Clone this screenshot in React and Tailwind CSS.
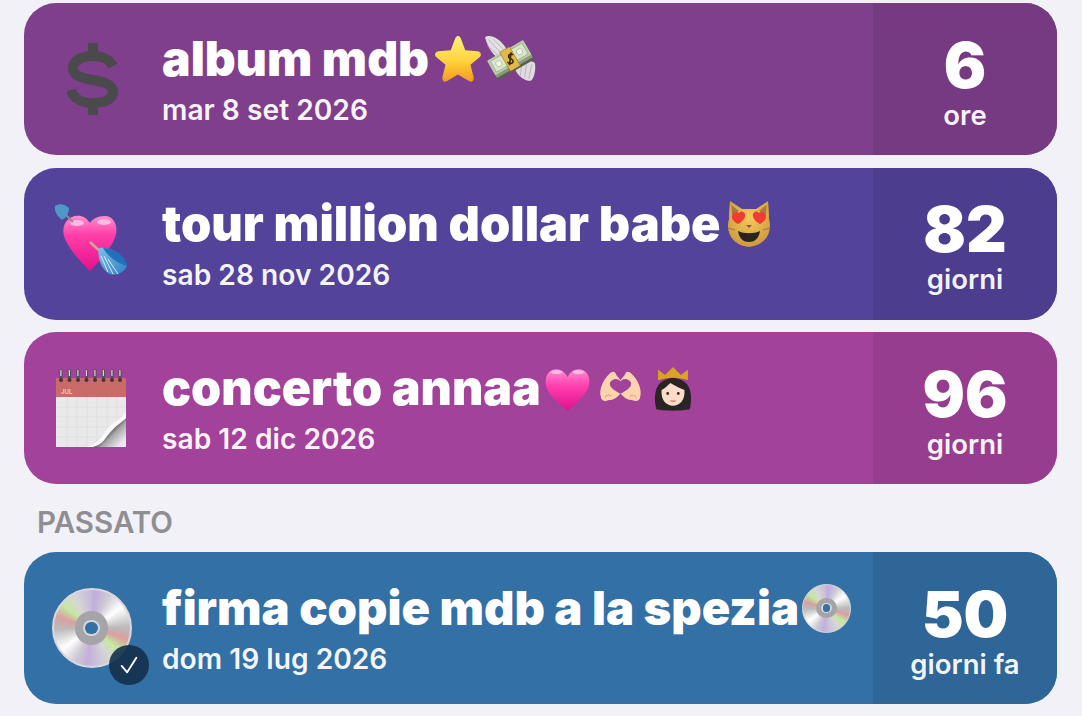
import React from "react";

function Star() {
  return (
    <svg viewBox="0 0 100 100" className="w-[52px] h-[52px] shrink-0">
      <defs>
        <linearGradient id="st" x1="0" y1="0" x2="0" y2="1">
          <stop offset="0" stopColor="#fff27a" />
          <stop offset="0.55" stopColor="#ffd23c" />
          <stop offset="1" stopColor="#f59a1c" />
        </linearGradient>
      </defs>
      <path d="M50 6 C53 6 55 9 56 12 L64 33 L87 35 C94 36 96 42 92 46 L74 61 L80 85 C81 92 76 96 70 92 L50 80 L30 92 C24 96 19 92 20 85 L26 61 L8 46 C4 42 6 36 13 35 L36 33 L44 12 C45 9 47 6 50 6 Z" fill="url(#st)" />
    </svg>
  );
}

function FlyingMoney() {
  return (
    <svg viewBox="0 0 100 100" className="w-[52px] h-[52px] shrink-0">
      <path d="M2 8 C10 2 30 8 44 32 L34 50 C20 48 8 30 2 8 Z" fill="#e2dfe2" />
      <path d="M8 12 L36 42 M18 12 L42 36 M6 24 L30 46" stroke="#a6a4a8" strokeWidth="1.3" />
      <path d="M98 58 C100 72 96 88 90 92 C76 92 64 80 60 70 L74 58 C82 54 92 52 98 58 Z" fill="#dedcde" />
      <path d="M92 60 L86 88 M82 60 L78 86 M72 64 L70 82" stroke="#a4a2a6" strokeWidth="1.3" />
      <g transform="rotate(-30 50 50)">
        <rect x="10" y="42" width="80" height="32" rx="1" fill="#565f50" />
        <rect x="10" y="37" width="80" height="32" rx="1" fill="#8a9a78" />
        <rect x="10" y="31" width="80" height="32" rx="1" fill="#bccdaa" />
        <rect x="15" y="35" width="70" height="24" fill="#d9e6cc" stroke="#93a684" strokeWidth="1.2" />
        <circle cx="27" cy="47" r="6" fill="#f0f5ea" stroke="#93a684" strokeWidth="1" />
        <circle cx="73" cy="47" r="6" fill="#f0f5ea" stroke="#93a684" strokeWidth="1" />
        <rect x="39" y="29" width="22" height="42" fill="#e2b94a" stroke="#8a6a1d" strokeWidth="1" />
      </g>
      <path d="M56 42 C52 39 45 42 48 47 C50 50 56 50 56 55 C56 59 50 60 45 56 M52 37 L49 62" stroke="#3a2e12" strokeWidth="3.2" fill="none" />
    </svg>
  );
}

function Dollar() {
  return (
    <svg viewBox="0 0 52 72" className="w-[52px] h-[72px]" fill="none" stroke="#4a4a4c">
      <path d="M46 23 C42 16 34 13 26 13 C14 13 6 18 6 25 C6 33 15 35 26 37 C38 39 46 42 46 49 C46 56 38 60 26 60 C14 60 6 55 4 47" strokeWidth="10" />
      <path d="M26 0 V10 M26 62 V72" strokeWidth="10" />
    </svg>
  );
}

function CupidHeart() {
  return (
    <svg viewBox="0 0 80 80" className="w-[80px] h-[80px]">
      <defs>
        <linearGradient id="ch" x1="0" y1="0" x2="0" y2="1">
          <stop offset="0" stopColor="#ff8fd0" />
          <stop offset="0.35" stopColor="#ff3fa8" />
          <stop offset="1" stopColor="#e6108a" />
        </linearGradient>
        <linearGradient id="fe" x1="0" y1="0" x2="1" y2="1">
          <stop offset="0" stopColor="#7ec0ea" />
          <stop offset="1" stopColor="#2e7fc4" />
        </linearGradient>
      </defs>
      <path d="M37 19 C33 12 25 10 19 13 C10 17 8 28 13 37 C19 49 29 59 37 67 C45 58 60 44 63 30 C65 20 60 12 52 12 C44 12 40 15 37 19 Z" fill="url(#ch)" />
      <ellipse cx="24" cy="19" rx="7" ry="3" fill="#ffc6e6" opacity="0.85" />
      <ellipse cx="51" cy="18" rx="7" ry="3" fill="#ffc6e6" opacity="0.85" />
      <path d="M10 8 L20 18" stroke="#9a8a84" strokeWidth="2" />
      <path d="M2 2 C6 -1 12 0 16 4 C16 9 13 14 9 16 C5 13 1 8 2 2 Z" fill="#4f97c8" />
      <path d="M37 38 L52 52" stroke="#c8a898" strokeWidth="2.4" />
      <path d="M46 44 C58 42 72 52 74 62 C70 70 62 72 56 70 C48 64 44 54 46 44 Z" fill="url(#fe)" />
      <path d="M50 44 C62 44 72 52 74 62 C66 60 56 54 50 44 Z" fill="#2270b8" />
      <path d="M48 52 L55 68 M51 52 L60 70 M55 55 L65 70" stroke="#d6ecfa" strokeWidth="1" />
    </svg>
  );
}

function Cat() {
  return (
    <svg viewBox="0 0 100 100" className="w-[50px] h-[50px] shrink-0">
      <defs>
        <radialGradient id="cg" cx="0.5" cy="0.35" r="0.75">
          <stop offset="0" stopColor="#f6cb5a" />
          <stop offset="1" stopColor="#c9913a" />
        </radialGradient>
      </defs>
      <path d="M12 4 L36 20 L64 20 L88 4 C90 24 90 32 90 40 C96 58 90 92 50 96 C10 92 4 58 10 40 C10 32 10 24 12 4 Z" fill="url(#cg)" />
      <path d="M15 12 L30 24 L16 32 Z M85 12 L70 24 L84 32 Z" fill="#a77a3e" />
      <path d="M30 28 C33 23 40 24 42 30 C44 38 36 46 28 50 C20 46 13 38 17 31 C20 25 27 25 30 28 Z" fill="#ef3b36" />
      <path d="M70 28 C73 25 80 25 83 31 C87 38 80 46 72 50 C64 46 56 38 58 30 C60 24 67 23 70 28 Z" fill="#ef3b36" />
      <path d="M44 52 L56 52 L50 58 Z" fill="#8a5a3a" />
      <path d="M28 64 C40 70 60 70 72 64 C70 80 60 86 50 86 C40 86 30 80 28 64 Z" fill="#2a2420" />
      <path d="M8 58 L22 62 M92 58 L78 62" stroke="#8a6a30" strokeWidth="1.5" />
    </svg>
  );
}

function Calendar() {
  const xs = [6, 14.5, 23, 31.5, 40, 48.5, 57, 65];
  return (
    <svg viewBox="0 0 72 80" className="w-[72px] h-[80px] -ml-[3px]">
      <defs>
        <linearGradient id="cu" gradientUnits="userSpaceOnUse" x1="52" y1="62" x2="66" y2="76">
          <stop offset="0" stopColor="#333333" />
          <stop offset="0.4" stopColor="#a8a8a8" />
          <stop offset="1" stopColor="#efe8ef" />
        </linearGradient>
      </defs>
      <rect x="1" y="10" width="70" height="19" fill="#c96b67" />
      <path d="M1 29 H71 V79 H1 Z" fill="#e9e9e9" />
      {[12, 22, 32, 42, 52, 62].map((x) => (
        <path key={x} d={`M${x} 29 V79`} stroke="#dcdcdc" strokeWidth="0.8" />
      ))}
      {[39, 49, 59, 69].map((y) => (
        <path key={y} d={`M1 ${y} H71`} stroke="#dcdcdc" strokeWidth="0.8" />
      ))}
      <path d="M71 50 L71 79 L34 79 C50 76 56 60 71 50 Z" fill="url(#cu)" />
      <path d="M71 44 C66 52 54 56 50 64 C46 72 40 77 30 79 L38 79 C46 77 50 72 53 66 C57 59 66 56 71 50 Z" fill="#fafafa" />
      <text x="6" y="26" fontFamily="Inter, sans-serif" fontSize="6" fontWeight="600" fill="#f3d2d0">JUL</text>
      {xs.map((x) => (
        <g key={x}>
          <rect x={x - 1.6} y="1" width="3.2" height="10" rx="1.6" fill="#54505c" />
          <rect x={x - 0.7} y="2" width="1.2" height="6" fill="#d8d4dc" />
          <circle cx={x} cy="12" r="2" fill="#4a3434" />
        </g>
      ))}
    </svg>
  );
}

function PinkHeart() {
  return (
    <svg viewBox="0 0 100 100" className="w-[47px] h-[47px] shrink-0">
      <defs>
        <linearGradient id="ph" x1="0" y1="0" x2="0" y2="1">
          <stop offset="0" stopColor="#ff8ed2" />
          <stop offset="0.4" stopColor="#ff3fb0" />
          <stop offset="1" stopColor="#e0108e" />
        </linearGradient>
      </defs>
      <path d="M50 26 C42 8 22 4 10 16 C0 28 2 46 12 60 C22 74 38 86 50 98 C62 86 78 74 88 60 C98 46 100 28 90 16 C78 4 58 8 50 26 Z" fill="url(#ph)" />
      <ellipse cx="27" cy="15" rx="12" ry="4" fill="#ffc8ea" opacity="0.85" />
      <ellipse cx="73" cy="15" rx="12" ry="4" fill="#ffc8ea" opacity="0.85" />
    </svg>
  );
}

function HeartHands() {
  return (
    <svg viewBox="0 0 50 40" className="w-[47px] h-[38px] shrink-0 ml-[6px] mr-[3px]">
      <path
        d="M4 29 C2 22 6 12 13 5 C16 2 19 2 20 5 C21 8 24 9 25 12 C26 9 29 8 30 5 C31 2 34 2 37 5 C44 12 48 22 46 29 C46 33 42 35 38 33 C34 33 30 32 26 27 L25 26 L24 27 C20 32 16 33 12 33 C8 35 4 33 4 29 Z M25 13 C22 9 16 10 14 14 C12 18 18 23 25 26 C32 23 38 18 36 14 C34 10 28 9 25 13 Z"
        fill="#fbd4ad"
        fillRule="evenodd"
      />
      <path d="M8 30 C11 27 13 27 15 29 M42 30 C39 27 37 27 35 29" stroke="#e0a97c" strokeWidth="1.2" fill="none" />
    </svg>
  );
}

function Princess() {
  return (
    <svg viewBox="0 0 50 52" className="w-[44px] h-[46px] shrink-0 ml-[4px] mt-[4px]">
      <path d="M6 48 C2 30 5 14 25 12 C45 14 48 30 44 48 C36 50 14 50 6 48 Z" fill="#2a2426" />
      <path d="M12 26 C16 24 20 20 22 18 C28 22 34 24 38 26 C39 38 32 44 25 44 C18 44 11 38 12 26 Z" fill="#fbdcc8" />
      <path d="M8 15 L8 3 L16 9 L25 0 L34 9 L42 3 L42 15 C32 11 18 11 8 15 Z" fill="#d9a425" />
      <circle cx="19" cy="30" r="1.6" fill="#3a2a20" />
      <circle cx="31" cy="30" r="1.6" fill="#3a2a20" />
      <path d="M22 38 C24 39 26 39 28 38" stroke="#d87a70" strokeWidth="1.6" fill="none" />
    </svg>
  );
}

function Cd({ big }) {
  const conic =
    "bg-[conic-gradient(#c2b0dc_8deg,#cfcbd4_28deg,#ffffff_55deg,#bcbcbc_88deg,#d9a0a0_108deg,#c6e8a0_128deg,#d6d6d6_150deg,#c2b0dc_188deg,#cfcbd4_208deg,#ffffff_235deg,#bcbcbc_268deg,#d9a0a0_288deg,#c6e8a0_308deg,#d6d6d6_330deg,#c2b0dc_368deg)]";
  return (
    <div className={`${big ? "w-[80px] h-[80px] border-2" : "w-[49px] h-[49px] border"} shrink-0 rounded-full border-[#d8d8dc] flex items-center justify-center ${conic}`}>
      <div className="w-[44%] h-[44%] rounded-full bg-[#a6a4a8] flex items-center justify-center">
        <div className="w-[50%] h-[50%] rounded-full bg-[#d4d6dc] flex items-center justify-center">
          <div className="w-[72%] h-[72%] rounded-full bg-[#3270a6]" />
        </div>
      </div>
    </div>
  );
}

function Card({ bg, panel, icon, title, titleSize, emoji, date, value, unit }) {
  return (
    <div className={`flex h-[152px] rounded-[32px] overflow-hidden ${bg}`}>
      <div className="w-[138px] shrink-0 flex items-center justify-center pr-[1px]">{icon}</div>
      <div className="flex-1 min-w-0 flex flex-col justify-center text-white pt-[3px]">
        <div className="flex items-center h-[50px]">
          <span className={`${titleSize} leading-[50px] font-black whitespace-nowrap`}>{title}</span>
          <span className="flex items-center ml-[3px]">{emoji}</span>
        </div>
        <div className="text-[28.2px] leading-[34px] font-semibold text-white/95 mt-[9px]">{date}</div>
      </div>
      <div className={`w-[184px] shrink-0 flex flex-col items-center justify-center text-white pt-[6px] ${panel}`}>
        <div className="text-[63px] leading-[60px] font-black">{value}</div>
        <div className="text-[27.5px] leading-[30px] font-semibold text-white/95 mt-[5px]">{unit}</div>
      </div>
    </div>
  );
}

export default function App() {
  return (
    <div className="w-[1082px] h-[716px] overflow-hidden bg-[#f2f1f8] font-['Inter',sans-serif] pl-[24px] pr-[25px] pt-[3px]">
      <div className="flex flex-col gap-[12.5px]">
        <Card
          bg="bg-[#803f8d]"
          panel="bg-[#763a83]"
          icon={<Dollar />}
          title="album mdb"
          titleSize="text-[48px]"
          emoji={<><Star /><FlyingMoney /></>}
          date="mar 8 set 2026"
          value="6"
          unit="ore"
        />
        <Card
          bg="bg-[#54439a]"
          panel="bg-[#4c3d8e]"
          icon={<CupidHeart />}
          title="tour million dollar babe"
          titleSize="text-[48.6px]"
          emoji={<Cat />}
          date="sab 28 nov 2026"
          value="82"
          unit="giorni"
        />
        <Card
          bg="bg-[#a3429b]"
          panel="bg-[#973d8f]"
          icon={<Calendar />}
          title="concerto annaa"
          titleSize="text-[48.3px]"
          emoji={<><PinkHeart /><HeartHands /><Princess /></>}
          date="sab 12 dic 2026"
          value="96"
          unit="giorni"
        />
      </div>
      <div className="text-[29.5px] leading-[32px] font-semibold text-[#8e8e93] pl-[13px] mt-[22px] mb-[14px]">PASSATO</div>
      <Card
        bg="bg-[#3270a6]"
        panel="bg-[#2e6698]"
        icon={
          <div className="relative -ml-[2px]">
            <Cd big />
            <div className="absolute -right-[17px] -bottom-[17px] w-[40px] h-[40px] rounded-full bg-[#14304c]/90 flex items-center justify-center">
              <svg viewBox="0 0 24 24" className="w-[22px] h-[22px]" fill="none" stroke="white" strokeWidth="2" strokeLinecap="round" strokeLinejoin="round">
                <path d="M4 13 L10 20 L20 4" />
              </svg>
            </div>
          </div>
        }
        title="firma copie mdb a la spezia"
        titleSize="text-[47.2px]"
        emoji={<Cd />}
        date="dom 19 lug 2026"
        value="50"
        unit="giorni fa"
      />
    </div>
  );
}
